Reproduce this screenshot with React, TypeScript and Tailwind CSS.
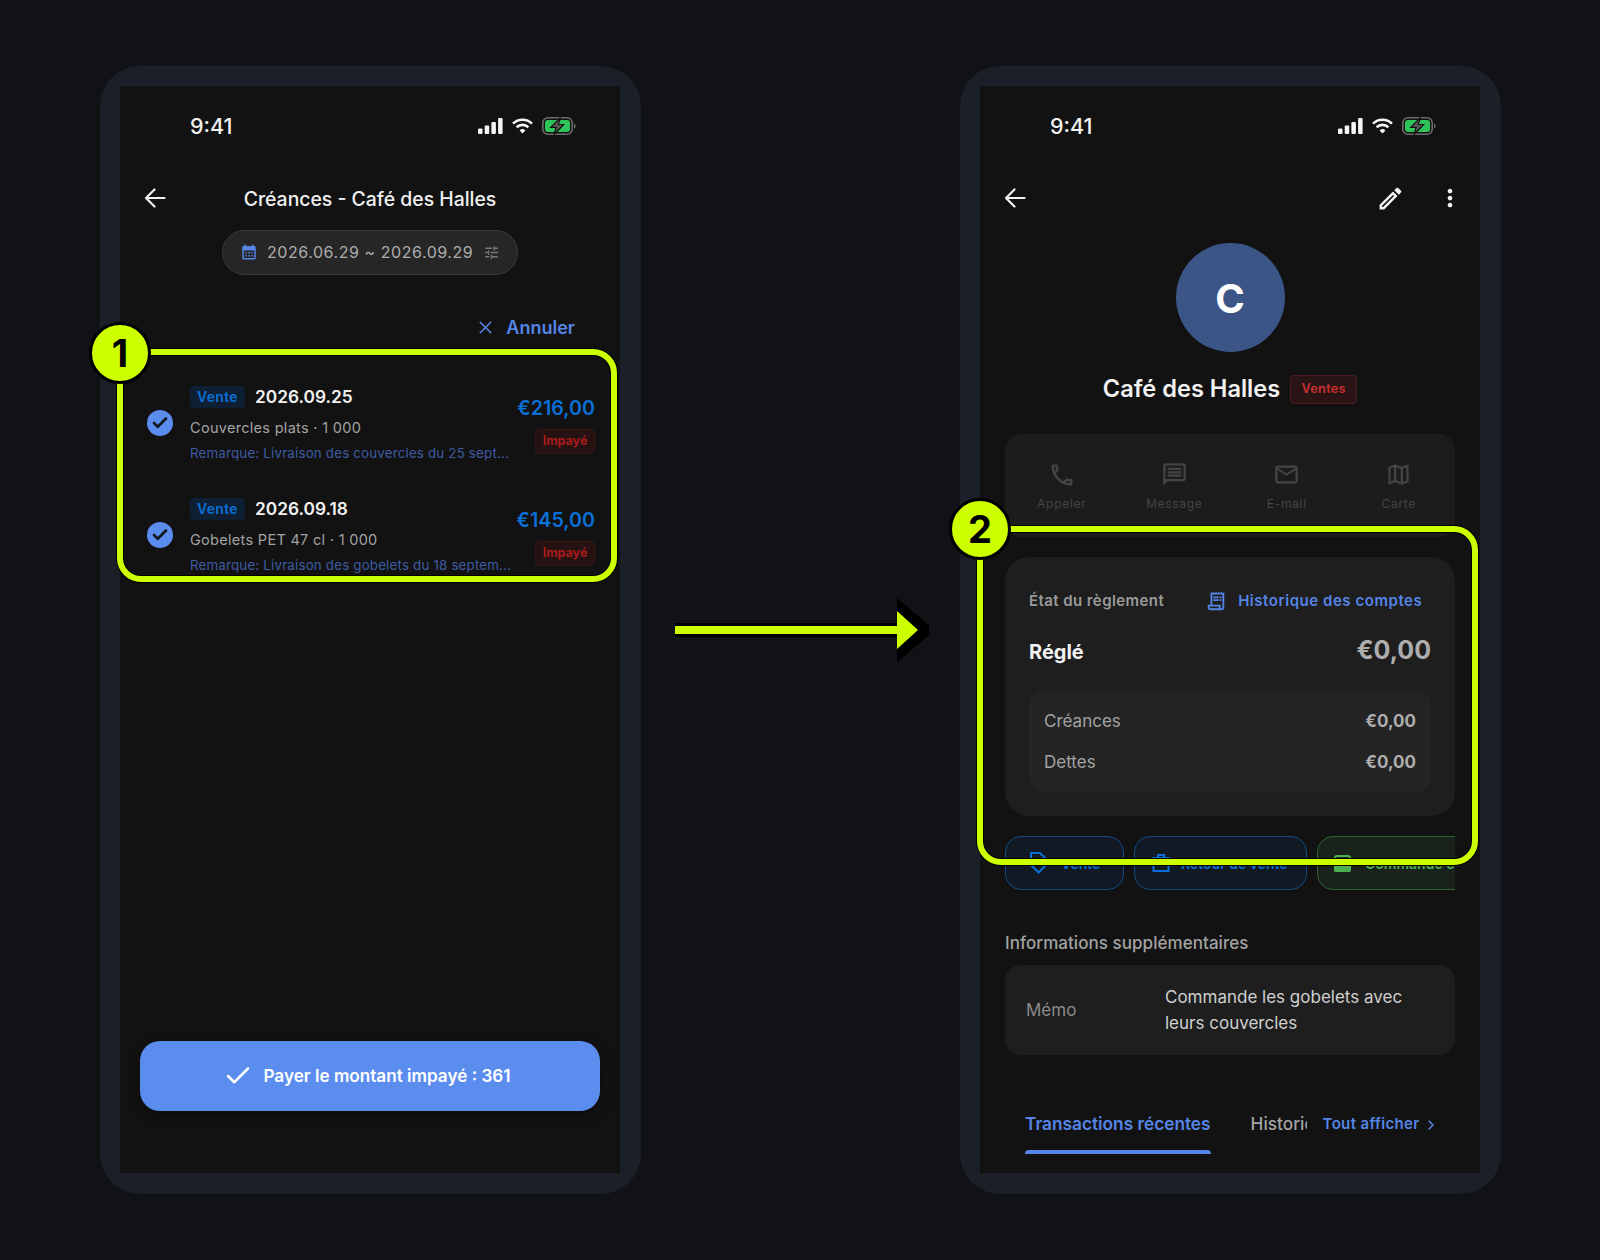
import { Check, ChevronRight, X } from 'lucide-react';
import {
  MdCalendarMonth,
  MdMoreVert,
  MdOutlineEdit,
  MdOutlineEmail,
  MdOutlineMap,
  MdOutlineMessage,
  MdOutlinePhone,
  MdOutlineReceiptLong,
  MdTune,
} from 'react-icons/md';

const items = [
  { date: '2026.09.25', desc: 'Couvercles plats · 1 000', note: 'Remarque: Livraison des couvercles du 25 sept...', amount: '€216,00' },
  { date: '2026.09.18', desc: 'Gobelets PET 47 cl · 1 000', note: 'Remarque: Livraison des gobelets du 18 septem...', amount: '€145,00' },
];

const actions = [
  { label: 'Appeler', icon: <MdOutlinePhone size={28} /> },
  { label: 'Message', icon: <MdOutlineMessage size={27} /> },
  { label: 'E-mail', icon: <MdOutlineEmail size={27} /> },
  { label: 'Carte', icon: <MdOutlineMap size={27} /> },
];

function BackArrow() {
  return (
    <svg width="22" height="20" viewBox="0 0 22 20" fill="none" stroke="#f2f2f2" strokeWidth="2.2" strokeLinecap="round" strokeLinejoin="round">
      <path d="M20.5 10H2M10.5 1.5 2 10l8.5 8.5" />
    </svg>
  );
}

function StatusBar() {
  return (
    <div className="flex h-[80px] shrink-0 items-center justify-between pl-[70px] pr-[44px]">
      <span className="pt-[1px] text-[21.5px] font-medium text-[#f2f2f2]">9:41</span>
      <div className="flex items-center gap-[9px]">
        <svg width="25" height="16" viewBox="0 0 25 16" fill="#f5f5f5">
          <rect x="0" y="10.5" width="4.5" height="5.5" rx="1" />
          <rect x="6.7" y="7.5" width="4.5" height="8.5" rx="1" />
          <rect x="13.4" y="4" width="4.5" height="12" rx="1" />
          <rect x="20.1" y="0" width="4.5" height="16" rx="1" />
        </svg>
        <svg width="21" height="16" viewBox="0 0 21 16" fill="none" stroke="#f5f5f5" strokeWidth="2.6">
          <path d="M1 5.6a13.6 13.6 0 0 1 19 0" />
          <path d="M4.6 9.2a8.6 8.6 0 0 1 11.8 0" />
          <path d="M10.5 15.5 7.6 12.4a4.2 4.2 0 0 1 5.8 0z" fill="#f5f5f5" stroke="none" />
        </svg>
        <svg width="34" height="18" viewBox="0 0 34 18" fill="none">
          <rect x="0.8" y="0.8" width="29.4" height="16.4" rx="5" stroke="#6b6b6b" strokeWidth="1.6" />
          <rect x="3" y="3" width="25" height="12" rx="3" fill="#2fc45a" />
          <path d="M32 6.5c1.2.4 1.6 1.4 1.6 2.5s-.4 2.1-1.6 2.5z" fill="#6b6b6b" />
          <path d="M18.5 0.5 8.8 10.3h5.4L12 17.5l9.7-10h-5.4z" fill="#5a5a5a" stroke="#121212" strokeWidth="1.2" />
        </svg>
      </div>
    </div>
  );
}

function PhoneFrame({ children }: { children: React.ReactNode }) {
  return (
    <div className="h-[1128px] w-[541px] rounded-[40px] bg-[#1b1f28] pb-[21px] pl-[20px] pr-[21px] pt-[20px]">
      <div className="flex h-full w-full flex-col overflow-hidden bg-[#121212]">
        <StatusBar />
        {children}
      </div>
    </div>
  );
}

function Highlight({ className, n, badge }: { className: string; n: string; badge: string }) {
  return (
    <>
      <div className={`absolute rounded-[24px] border-[6px] border-[#ccff00] shadow-[0_0_0_1px_#000,inset_0_0_0_1px_#000] ${className}`} />
      <div
        className={`absolute flex h-[62px] w-[62px] items-center justify-center rounded-full border-[3px] border-black bg-[#ccff00] text-[38px] font-bold text-black ${badge}`}
      >
        {n}
      </div>
    </>
  );
}

function ListScreen() {
  return (
    <PhoneFrame>
      <div className="relative flex h-[64px] shrink-0 items-center justify-center pt-[3px]">
        <div className="absolute left-[24px] top-[22px]"><BackArrow /></div>
        <span className="text-[19.4px] font-medium text-[#f0f0f0]">Créances - Café des Halles</span>
      </div>

      <div className="mx-auto flex h-[45px] w-[296px] shrink-0 items-center rounded-full border border-[#3a3a3a] bg-[#262626] pb-[1px] pl-[17px]">
        <MdCalendarMonth size={18} className="text-[#5585e6]" />
        <span className="ml-[9px] text-[16px] tracking-[0.55px] text-[#adadad]">2026.06.29 ~ 2026.09.29</span>
        <MdTune size={17} className="ml-[10px] text-[#777]" />
      </div>

      <div className="mt-[36px] flex h-[32px] shrink-0 items-center justify-end pr-[45px]">
        <X size={21} strokeWidth={1.8} className="text-[#5585e6]" />
        <span className="ml-[10px] text-[18px] font-semibold text-[#5585e6]">Annuler</span>
      </div>

      <div className="mt-[30px] flex flex-col">
        {items.map((item) => (
          <div key={item.date} className="flex h-[112px] items-start pl-[27px] pr-[25px] pt-[13px]">
            <div className="mt-[24px] flex h-[26px] w-[26px] shrink-0 items-center justify-center rounded-full bg-[#5b8def]">
              <Check size={18} strokeWidth={3.6} className="text-[#12161f]" />
            </div>
            <div className="ml-[17px] w-[326px] shrink-0">
              <div className="flex h-[22px] items-center">
                <span className="flex h-[22px] w-[55px] items-center justify-center rounded-[4px] bg-[#0f1f33] pb-[1px] text-[14px] font-semibold tracking-[0.3px] text-[#0a6fd6]">Vente</span>
                <span className="ml-[10px] text-[17.3px] font-semibold text-[#f2f2f2]">{item.date}</span>
              </div>
              <p className="mt-[10px] text-[14.5px] leading-[20px] tracking-[0.3px] text-[#a3a3a3]">{item.desc}</p>
              <p className="mt-[5px] whitespace-nowrap text-[13.3px] leading-[20px] tracking-[0.2px] text-[#3f5ca3]">{item.note}</p>
            </div>
            <div className="ml-auto flex flex-col items-end pt-[9px]">
              <span className="text-[19.7px] font-semibold leading-[26px] text-[#0a6fd6]">{item.amount}</span>
              <span className="mt-[8px] flex h-[25px] w-[60px] items-center justify-center rounded-[4px] border border-[#2f1616] bg-[#261212] text-[12.5px] font-bold text-[#a81c1c]">Impayé</span>
            </div>
          </div>
        ))}
      </div>

      <button className="mx-[20px] mb-[62px] mt-auto flex h-[70px] shrink-0 items-center justify-center rounded-[20px] bg-[#5b8def] pr-[6px] shadow-[0_4px_12px_rgba(0,0,0,0.35)]">
        <Check size={30} strokeWidth={2} className="text-white" />
        <span className="ml-[10px] text-[17.15px] font-semibold text-white">Payer le montant impayé : 361</span>
      </button>
    </PhoneFrame>
  );
}

function DetailScreen() {
  return (
    <PhoneFrame>
      <div className="flex h-[64px] shrink-0 items-center justify-between pl-[24px] pr-[16px]">
        <BackArrow />
        <div className="flex items-center gap-[31px] text-[#f2f2f2]">
          <MdOutlineEdit size={29} />
          <MdMoreVert size={28} />
        </div>
      </div>

      <div className="mx-auto mt-[13px] flex h-[109px] w-[109px] shrink-0 items-center justify-center rounded-full bg-[#3b5587] pt-[2px] text-[40px] font-bold text-white">C</div>

      <div className="mt-[23px] flex h-[28px] shrink-0 items-center justify-center gap-[10px]">
        <span className="text-[23.6px] font-semibold text-[#f2f2f2]">Café des Halles</span>
        <span className="flex h-[29px] w-[67px] items-center justify-center rounded-[4px] border border-[#4d1c1f] bg-[#2a1416] text-[12.7px] font-semibold tracking-[0.3px] text-[#c9302f]">Ventes</span>
      </div>

      <div className="mx-[25px] mt-[31px] grid h-[103px] shrink-0 grid-cols-4 rounded-[16px] bg-[#1c1c1c] py-[26px]">
        {actions.map((a, i) => (
          <div key={a.label} className={`flex flex-col items-center pt-[1px] text-[#444] ${i < 3 ? 'border-r border-[#212121] pl-[2px]' : ''}`}>
            <div className="flex h-[27px] items-center">{a.icon}</div>
            <span className="mt-[6px] text-[12.2px] leading-[20px] tracking-[0.6px]">{a.label}</span>
          </div>
        ))}
      </div>

      <div className="mx-[25px] mt-[20px] h-[259px] shrink-0 rounded-[24px] bg-[#1e1e1e] px-[24px] pt-[32px]">
        <div className="flex h-[24px] items-center">
          <span className="text-[15px] font-semibold tracking-[0.42px] text-[#9a9a9a]">État du règlement</span>
          <MdOutlineReceiptLong size={22} className="ml-[41px] text-[#5585e6]" />
          <span className="ml-[11px] whitespace-nowrap text-[15px] font-semibold tracking-[0.55px] text-[#5585e6]">Historique des comptes</span>
        </div>
        <div className="mt-[23px] flex h-[32px] items-center justify-between">
          <span className="text-[20px] font-bold text-[#f2f2f2]">Réglé</span>
          <span className="-mt-[2px] text-[25px] font-bold text-[#adadad]">€0,00</span>
        </div>
        <div className="mt-[23px] h-[101px] rounded-[14px] bg-[#242424] px-[15px] pt-[10px] text-[17px]">
          <div className="flex h-[41px] items-center justify-between">
            <span className="text-[#a3a3a3]">Créances</span>
            <span className="font-bold text-[#adadad]">€0,00</span>
          </div>
          <div className="flex h-[41px] items-center justify-between">
            <span className="text-[#a3a3a3]">Dettes</span>
            <span className="font-bold text-[#adadad]">€0,00</span>
          </div>
        </div>
      </div>

      <div className="mx-[25px] mt-[20px] flex h-[54px] shrink-0 gap-[10px] overflow-hidden text-[14px] font-semibold">
        <div className="flex w-[119px] shrink-0 items-center rounded-[16px] border border-[#134a80] bg-[#111a24] pl-[23px] text-[#0a6fd6]">
          <svg width="19" height="24" viewBox="0 0 19 24" fill="none" stroke="currentColor" strokeWidth="2">
            <path d="M2 2h9l6 6v6l-7.5 7.5L2 14z" />
          </svg>
          <span className="ml-[13px]">Vente</span>
        </div>
        <div className="flex w-[173px] shrink-0 items-center rounded-[16px] border border-[#134a80] bg-[#111a24] pl-[17px] text-[#0a6fd6]">
          <svg width="18" height="20" viewBox="0 0 18 20" fill="none" stroke="currentColor" strokeWidth="2">
            <path d="M1.5 5h15v13h-15zM6 5V2h6v3" />
          </svg>
          <span className="ml-[11px]">Retour de vente</span>
        </div>
        <div className="flex w-[180px] shrink-0 items-center rounded-[16px] border border-[#2f6433] bg-[#1a231b] pl-[16px] text-[#4caf50]">
          <svg width="17" height="17" viewBox="0 0 17 17" fill="currentColor">
            <rect x="1" y="1" width="15" height="15" rx="2" fill="none" stroke="currentColor" strokeWidth="2" />
            <rect x="0" y="9" width="17" height="8" rx="2" />
          </svg>
          <span className="ml-[14px] whitespace-nowrap">Commande client</span>
        </div>
      </div>

      <p className="mx-[25px] mt-[41px] text-[17px] font-medium leading-[24px] tracking-[0.05px] text-[#a3a3a3]">Informations supplémentaires</p>

      <div className="mx-[25px] mt-[10px] flex h-[90px] shrink-0 items-center rounded-[16px] bg-[#1e1e1e] pl-[21px] pt-[1px] text-[17px]">
        <span className="w-[139px] text-[#8a8a8a]">Mémo</span>
        <p className="-mt-[2px] w-[270px] leading-[26px] text-[#d0d0d0]">Commande les gobelets avec leurs couvercles</p>
      </div>

      <div className="mt-[43px] flex h-[56px] shrink-0 pl-[45px]">
        <div className="flex h-full flex-col pt-[13px] text-[17.25px] font-semibold leading-[26px] text-[#5585e6]">
          Transactions récentes
          <div className="mt-auto h-[4px] rounded-t-full bg-[#5585e6]" />
        </div>
        <div className="ml-[40px] w-[56px] overflow-hidden whitespace-nowrap pt-[13px] text-[17.25px] font-medium leading-[26px] text-[#a3a3a3]">Historique</div>
        <div className="ml-[16px] flex h-[52px] items-center pt-[1px] text-[15px] font-semibold tracking-[0.35px] text-[#5585e6]">
          Tout afficher
          <ChevronRight size={16} strokeWidth={2.2} className="ml-[3px]" />
        </div>
      </div>
    </PhoneFrame>
  );
}

export default function App() {
  return (
    <div className="relative flex h-[1260px] w-[1600px] gap-[319px] bg-[#101216] pl-[100px] pt-[66px] font-['Inter',sans-serif]">
      <ListScreen />
      <DetailScreen />

      <Highlight className="left-[117px] top-[349px] h-[233px] w-[500px]" badge="left-[89px] top-[322px]" n="1" />
      <Highlight className="left-[977px] top-[526px] h-[339px] w-[501px]" badge="left-[949px] top-[498px]" n="2" />

      <svg className="absolute left-[670px] top-[590px]" width="265" height="80" viewBox="0 0 265 80">
        <path d="M5 33h222V8l32 27v10l-32 27V47H5z" fill="#000" />
        <path d="M5 36h222V21l21 19-21 19V44H5z" fill="#ccff00" />
      </svg>
    </div>
  );
}
